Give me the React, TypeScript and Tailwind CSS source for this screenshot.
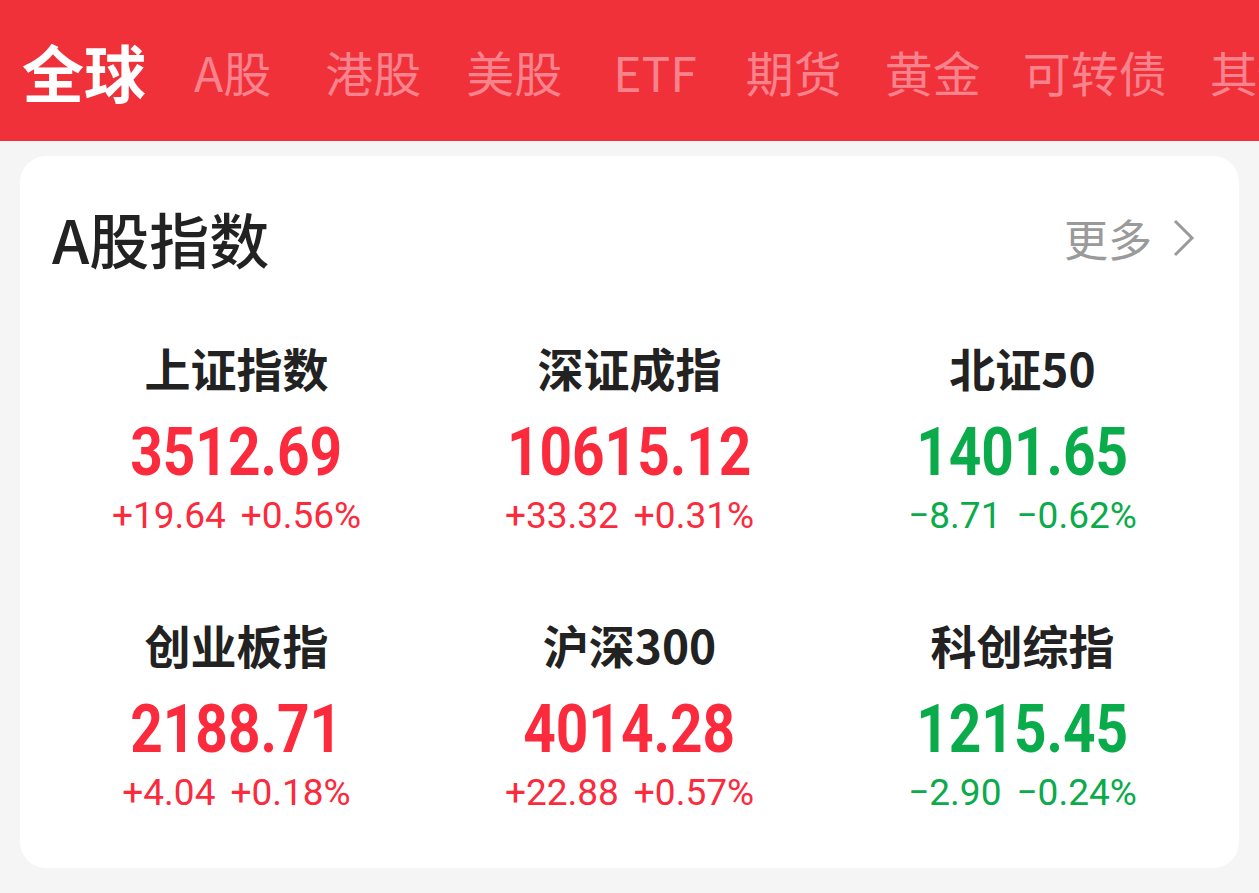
import React from "react";

const tabs: { t: string; cls: string }[] = [
  { t: "A股", cls: "mr-[9px]" },
  { t: "港股", cls: "" },
  { t: "美股", cls: "mr-[6px]" },
  { t: "ETF", cls: "mr-[4px]" },
  { t: "期货", cls: "mr-[-2px]" },
  { t: "黄金", cls: "mr-[-3px]" },
  { t: "可转债", cls: "mr-[-2px]" },
  { t: "其他", cls: "" },
];

type Item = { name: string; value: string; change: string; pct: string; up: boolean };

const items: Item[] = [
  { name: "上证指数", value: "3512.69", change: "+19.64", pct: "+0.56%", up: true },
  { name: "深证成指", value: "10615.12", change: "+33.32", pct: "+0.31%", up: true },
  { name: "北证50", value: "1401.65", change: "−8.71", pct: "−0.62%", up: false },
  { name: "创业板指", value: "2188.71", change: "+4.04", pct: "+0.18%", up: true },
  { name: "沪深300", value: "4014.28", change: "+22.88", pct: "+0.57%", up: true },
  { name: "科创综指", value: "1215.45", change: "−2.90", pct: "−0.24%", up: false },
];

const cjk = "font-['Noto_Sans_CJK_SC',sans-serif]";
const num = "font-['Roboto','Noto_Sans_CJK_SC',sans-serif]";

function Cell({ it }: { it: Item }) {
  const color = it.up ? "text-[#fb2a3c]" : "text-[#0aab4a]";
  return (
    <div className="flex flex-col items-center">
      <div className={`${cjk} text-[46px] leading-[46px] font-bold text-[#222222]`}>{it.name}</div>
      <div className={`${num} ${color} mt-[30px] text-[66px] leading-[66px] font-bold scale-x-[0.86]`}>{it.value}</div>
      <div className={`${num} ${color} mt-[12px] flex gap-[15px] text-[37px] leading-[36px]`}>
        <span>{it.change}</span>
        <span>{it.pct}</span>
      </div>
    </div>
  );
}

export default function App() {
  return (
    <div className="w-[1259px] h-[893px] bg-[#f5f5f5] overflow-hidden">
      <div className={`${cjk} h-[141px] bg-[#f0313a] flex items-center gap-[45px] pl-[22px] whitespace-nowrap overflow-hidden`}>
        <span className="text-[62px] font-bold text-white leading-none mr-[3px]">全球</span>
        {tabs.map((t) => (
          <span key={t.t} className={`text-[48px] text-[#f8838c] leading-none ${t.cls}`}>
            {t.t}
          </span>
        ))}
      </div>
      <div className="mx-[20px] mt-[15px] bg-white rounded-[26px] pt-[52px] pb-[57px] px-[20px]">
        <div className="flex items-center justify-between pl-[12px] pr-[23px]">
          <div className={`${cjk} text-[60px] leading-[60px] font-medium text-[#222222]`}>A股指数</div>
          <div className="flex items-center gap-[20px]">
            <span className={`${cjk} text-[44px] leading-[44px] text-[#9a9a9a]`}>更多</span>
            <svg width="24" height="40" viewBox="0 0 24 40" fill="none">
              <path d="M3 3 L20 20 L3 37" stroke="#9a9a9a" strokeWidth="3" strokeLinejoin="miter" />
            </svg>
          </div>
        </div>
        <div className="mt-[76px] grid grid-cols-3 gap-y-[87px]">
          {items.map((it) => (
            <Cell key={it.name} it={it} />
          ))}
        </div>
      </div>
    </div>
  );
}
